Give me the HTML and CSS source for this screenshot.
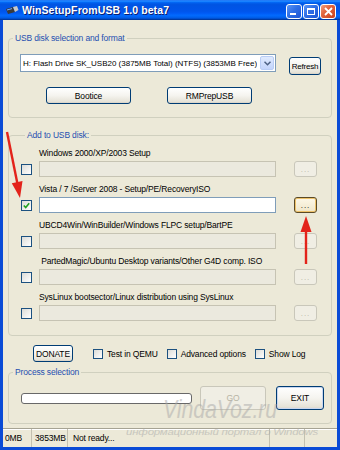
FILE: index.html
```html
<!DOCTYPE html>
<html lang="en">
<head>
  <meta charset="UTF-8" />
  <title>WinSetupFromUSB 1.0 beta7</title>
  <link rel="stylesheet" href="styles.css">
</head>
<body>
  <div class="window">
    <div class="titlebar">
      <svg class="app-icon" width="14" height="10" viewBox="0 0 14 10">
        <path d="M1 3 L8 1 L10 6 L3 8 Z" fill="#3a3a3a"/>
        <path d="M8 1 L12 0 L13.5 4 L10 6 Z" fill="#c8c8c8"/>
        <path d="M2 4 L7 2.6" stroke="#7ab0ff" stroke-width="1"/>
      </svg>
      <span class="title">WinSetupFromUSB 1.0 beta7</span>
      <div class="caption-buttons">
        <span class="cap-btn minimize"><i></i></span>
        <span class="cap-btn maximize"><i></i></span>
        <span class="cap-btn close">
          <svg width="9" height="9" viewBox="0 0 9 9"><path d="M1 1 L8 8 M8 1 L1 8" stroke="#fff" stroke-width="1.8"/></svg>
        </span>
      </div>
    </div>

    <div class="client">
      <fieldset class="group group-usb">
        <legend>USB disk selection and format</legend>
        <div class="usb-row">
          <div class="combo">
            <span class="combo-text">H: Flash Drive SK_USB20 (3875MB Total) (NTFS) (3853MB Free)</span>
            <span class="combo-arrow">
              <svg width="7" height="5" viewBox="0 0 7 5"><path d="M0.5 0.8 L3.5 3.8 L6.5 0.8" fill="none" stroke="#4d6185" stroke-width="1.5"/></svg>
            </span>
          </div>
          <span class="btn refresh">Refresh</span>
        </div>
        <div class="tools-row">
          <span class="btn tool">Bootice</span>
          <span class="btn tool">RMPrepUSB</span>
        </div>
      </fieldset>

      <fieldset class="group group-add">
        <legend>Add to USB disk:</legend>
        <div class="source">
          <div class="source-label">Windows 2000/XP/2003 Setup</div>
          <div class="source-row">
            <span class="checkbox"></span>
            <span class="path disabled"></span>
            <span class="btn browse disabled">...</span>
          </div>
        </div>
        <div class="source">
          <div class="source-label">Vista / 7 /Server 2008 - Setup/PE/RecoveryISO</div>
          <div class="source-row">
            <span class="checkbox checked">
              <svg width="7" height="7" viewBox="0 0 7 7"><path d="M0.8 3.5 L2.7 5.5 L6.2 1.2" fill="none" stroke="#21a121" stroke-width="1.6"/></svg>
            </span>
            <span class="path"></span>
            <span class="btn browse focused">...</span>
          </div>
        </div>
        <div class="source">
          <div class="source-label">UBCD4Win/WinBuilder/Windows FLPC setup/BartPE</div>
          <div class="source-row">
            <span class="checkbox"></span>
            <span class="path disabled"></span>
            <span class="btn browse disabled">...</span>
          </div>
        </div>
        <div class="source">
          <div class="source-label">&nbsp;PartedMagic/Ubuntu Desktop variants/Other G4D comp. ISO</div>
          <div class="source-row">
            <span class="checkbox"></span>
            <span class="path disabled"></span>
            <span class="btn browse disabled">...</span>
          </div>
        </div>
        <div class="source">
          <div class="source-label">SysLinux bootsector/Linux distribution using SysLinux</div>
          <div class="source-row">
            <span class="checkbox"></span>
            <span class="path disabled"></span>
            <span class="btn browse disabled">...</span>
          </div>
        </div>
      </fieldset>

      <div class="options">
        <span class="btn donate">DONATE</span>
        <label class="option"><span class="checkbox"></span>Test in QEMU</label>
        <label class="option"><span class="checkbox"></span>Advanced options</label>
        <label class="option"><span class="checkbox"></span>Show Log</label>
      </div>

      <fieldset class="group group-process">
        <legend>Process selection</legend>
        <div class="process-row">
          <span class="progress"></span>
          <span class="btn go disabled">GO</span>
          <span class="btn exit">EXIT</span>
        </div>
      </fieldset>

      <div class="statusbar">
        <span class="panel p1">0MB</span>
        <span class="panel p2">3853MB</span>
        <span class="panel p3">Not ready...</span>
        <span class="panel p4"></span>
        <span class="panel p5"></span>
      </div>
    </div>

    <svg class="overlay" width="340" height="450" viewBox="0 0 340 450">
      <text x="163" y="418" class="wm-big" textLength="114" lengthAdjust="spacingAndGlyphs">VindaVoz.ru</text>
      <text x="126" y="435" class="wm-small" textLength="192" lengthAdjust="spacingAndGlyphs">информационный портал о Windows</text>
      <line x1="7" y1="132" x2="17.5" y2="184" stroke="#e3231b" stroke-width="2.4"/>
      <polygon points="20,198 22.5,181 11.8,183.2" fill="#e3231b"/>
      <line x1="306" y1="264" x2="306" y2="229" stroke="#e3231b" stroke-width="2.4"/>
      <polygon points="306,216 300.5,232 311.5,232" fill="#e3231b"/>
    </svg>
  </div>
</body>
</html>
```

FILE: styles.css
```css
html, body {
  margin: 0;
  padding: 0;
  background: #ece9d8;
}
.window {
  position: relative;
  width: 340px;
  height: 450px;
  box-sizing: border-box;
  padding: 0 3px 3px 3px;
  background: #0a4bd6;
  display: flex;
  flex-direction: column;
  font-family: "Liberation Sans", Arial, sans-serif;
  font-size: 8.5px;
  letter-spacing: -0.15px;
  color: #000;
  overflow: hidden;
}
.titlebar {
  height: 22px;
  margin: 0 -3px;
  padding: 0 4px 0 5px;
  display: flex;
  align-items: center;
  background: linear-gradient(to bottom, #0058ee 0%, #3593ff 4%, #288eff 6%, #127dff 8%, #036ffc 10%, #0262ee 14%, #0057e5 20%, #0054e3 24%, #0055eb 56%, #005bf5 66%, #026afe 76%, #0062ef 86%, #0052d6 92%, #0040ab 96%, #003092 100%);
}
.app-icon {
  margin-right: 3px;
  margin-top: 2px;
}
.title {
  color: #fff;
  font-weight: bold;
  font-size: 10.5px;
  letter-spacing: 0.1px;
  text-shadow: 1px 1px 0 #0a1e6e;
  flex: 1;
}
.caption-buttons {
  display: flex;
  gap: 1px;
  margin-top: 2px;
}
.cap-btn {
  width: 16px;
  height: 15px;
  box-sizing: border-box;
  border: 1px solid #fff;
  border-radius: 3px;
  background: linear-gradient(135deg, #5a95f5 0%, #2f6fe6 45%, #1c55d4 100%);
  display: flex;
  align-items: center;
  justify-content: center;
  position: relative;
}
.cap-btn.minimize i {
  position: absolute;
  left: 3px;
  bottom: 3px;
  width: 6px;
  height: 2px;
  background: #fff;
}
.cap-btn.maximize i {
  width: 8px;
  height: 7px;
  box-sizing: border-box;
  border: 1px solid #fff;
  border-top-width: 2px;
}
.cap-btn.close {
  background: linear-gradient(135deg, #f0a080 0%, #e2653c 40%, #c8401c 100%);
}

.client {
  flex: 1;
  display: flex;
  flex-direction: column;
  background: #ece9d8;
  padding: 13px 5px 0 5px;
}
.group {
  margin: 0;
  padding: 0;
  border: 1px solid #d0d0bf;
  border-radius: 4px;
  min-width: 0;
}
.group legend {
  margin-left: 4px;
  padding: 0 2px;
  line-height: 10px;
  color: #1f4fb0;
}

.usb-row {
  display: flex;
  align-items: flex-start;
  padding: 11px 0 0 11px;
}
.combo {
  width: 256px;
  height: 18px;
  box-sizing: border-box;
  border: 1px solid #7f9db9;
  background: #fff;
  display: flex;
  align-items: center;
  justify-content: space-between;
  padding-left: 2px;
}
.combo-text {
  white-space: nowrap;
  overflow: hidden;
  font-size: 8px;
  letter-spacing: 0;
}
.combo-arrow {
  width: 14px;
  height: 14px;
  margin-right: 1px;
  flex-shrink: 0;
  box-sizing: border-box;
  border: 1px solid #b9cdf5;
  border-radius: 2px;
  background: linear-gradient(#dfeafe, #c3d4fb);
  display: flex;
  align-items: center;
  justify-content: center;
}
.btn {
  box-sizing: border-box;
  border: 1px solid #003c74;
  border-radius: 3px;
  background: linear-gradient(#ffffff 0%, #f5f4ef 50%, #e6e3d8 90%, #d6d0c5 100%);
  display: flex;
  align-items: center;
  justify-content: center;
  white-space: nowrap;
}
.btn.disabled {
  border-color: #c9c7ba;
  background: #f0eee4;
  color: #b7b4a5;
}
.refresh {
  width: 32px;
  height: 18px;
  margin: 3px 0 0 13px;
  font-size: 8px;
  letter-spacing: -0.2px;
}
.tools-row {
  display: flex;
  gap: 36px;
  padding: 12px 0 13px 37px;
}
.tool {
  width: 85px;
  height: 17px;
}

.group-add {
  margin-top: 12px;
  padding: 7px 0 8px 12px;
}
.source {
  height: 36px;
}
.source-label {
  line-height: 12px;
  margin-left: 18px;
  white-space: nowrap;
}
.source-row {
  display: flex;
  align-items: center;
  margin-top: 2px;
  height: 16px;
}
.checkbox {
  width: 11px;
  height: 11px;
  box-sizing: border-box;
  border: 1px solid #1c5180;
  background: linear-gradient(135deg, #dcdcd7, #ffffff);
  display: inline-flex;
  align-items: center;
  justify-content: center;
  flex-shrink: 0;
}
.source-row .checkbox {
  margin-right: 7px;
}
.path {
  width: 237px;
  height: 16px;
  box-sizing: border-box;
  border: 1px solid #7f9db9;
  background: #fff;
}
.path.disabled {
  border-color: #c6c3b3;
  background: #ebe9de;
}
.browse {
  width: 23px;
  height: 16px;
  margin-left: 18px;
  font-size: 8px;
  letter-spacing: 1px;
}
.browse.focused {
  border-color: #5b4a26;
  box-shadow: inset 0 0 0 1px #eec26a;
  background: linear-gradient(#fdf8e8, #efe6c8);
}

.options {
  display: flex;
  align-items: center;
  margin-top: 9px;
  padding-left: 25px;
  gap: 9px;
}
.donate {
  width: 40px;
  height: 17px;
  margin-right: 11px;
}
.option {
  display: flex;
  align-items: center;
  gap: 4px;
}
.option .checkbox {
  width: 10px;
  height: 10px;
}

.group-process {
  margin-top: 5px;
}
.process-row {
  display: flex;
  align-items: center;
  padding: 9px 0 13px 12px;
}
.progress {
  width: 171px;
  height: 11px;
  box-sizing: border-box;
  border: 1px solid #686868;
  border-radius: 3px;
  background: #fff;
}
.go {
  width: 66px;
  height: 24px;
  margin-left: 8px;
}
.exit {
  width: 48px;
  height: 24px;
  margin-left: 10px;
  box-shadow: inset 0 0 0 1px #c9d7f0;
}

.statusbar {
  display: flex;
  height: 18px;
  margin: 4px -5px 0 -5px;
  border-top: 1px solid #a6a393;
  box-shadow: inset 0 1px 0 #fff;
}
.panel {
  box-sizing: border-box;
  height: 100%;
  padding-left: 2px;
  display: flex;
  align-items: center;
  border-right: 1px solid #c3c0b0;
}
.p1 { width: 29px; }
.p2 { width: 36px; padding-left: 3px; }
.p3 { width: 202px; padding-left: 5px; }
.p4 { width: 35px; }
.p5 { flex: 1; border-right: none; }

.overlay {
  position: absolute;
  left: 0;
  top: 0;
  pointer-events: none;
}
.wm-big {
  font-family: "Liberation Sans", Arial, sans-serif;
  font-style: italic;
  font-size: 26px;
  fill: #a9a9a9;
  opacity: 0.5;
}
.wm-small {
  font-family: "Liberation Sans", Arial, sans-serif;
  font-style: italic;
  font-size: 9px;
  fill: #a9a9a9;
  opacity: 0.55;
}
```
